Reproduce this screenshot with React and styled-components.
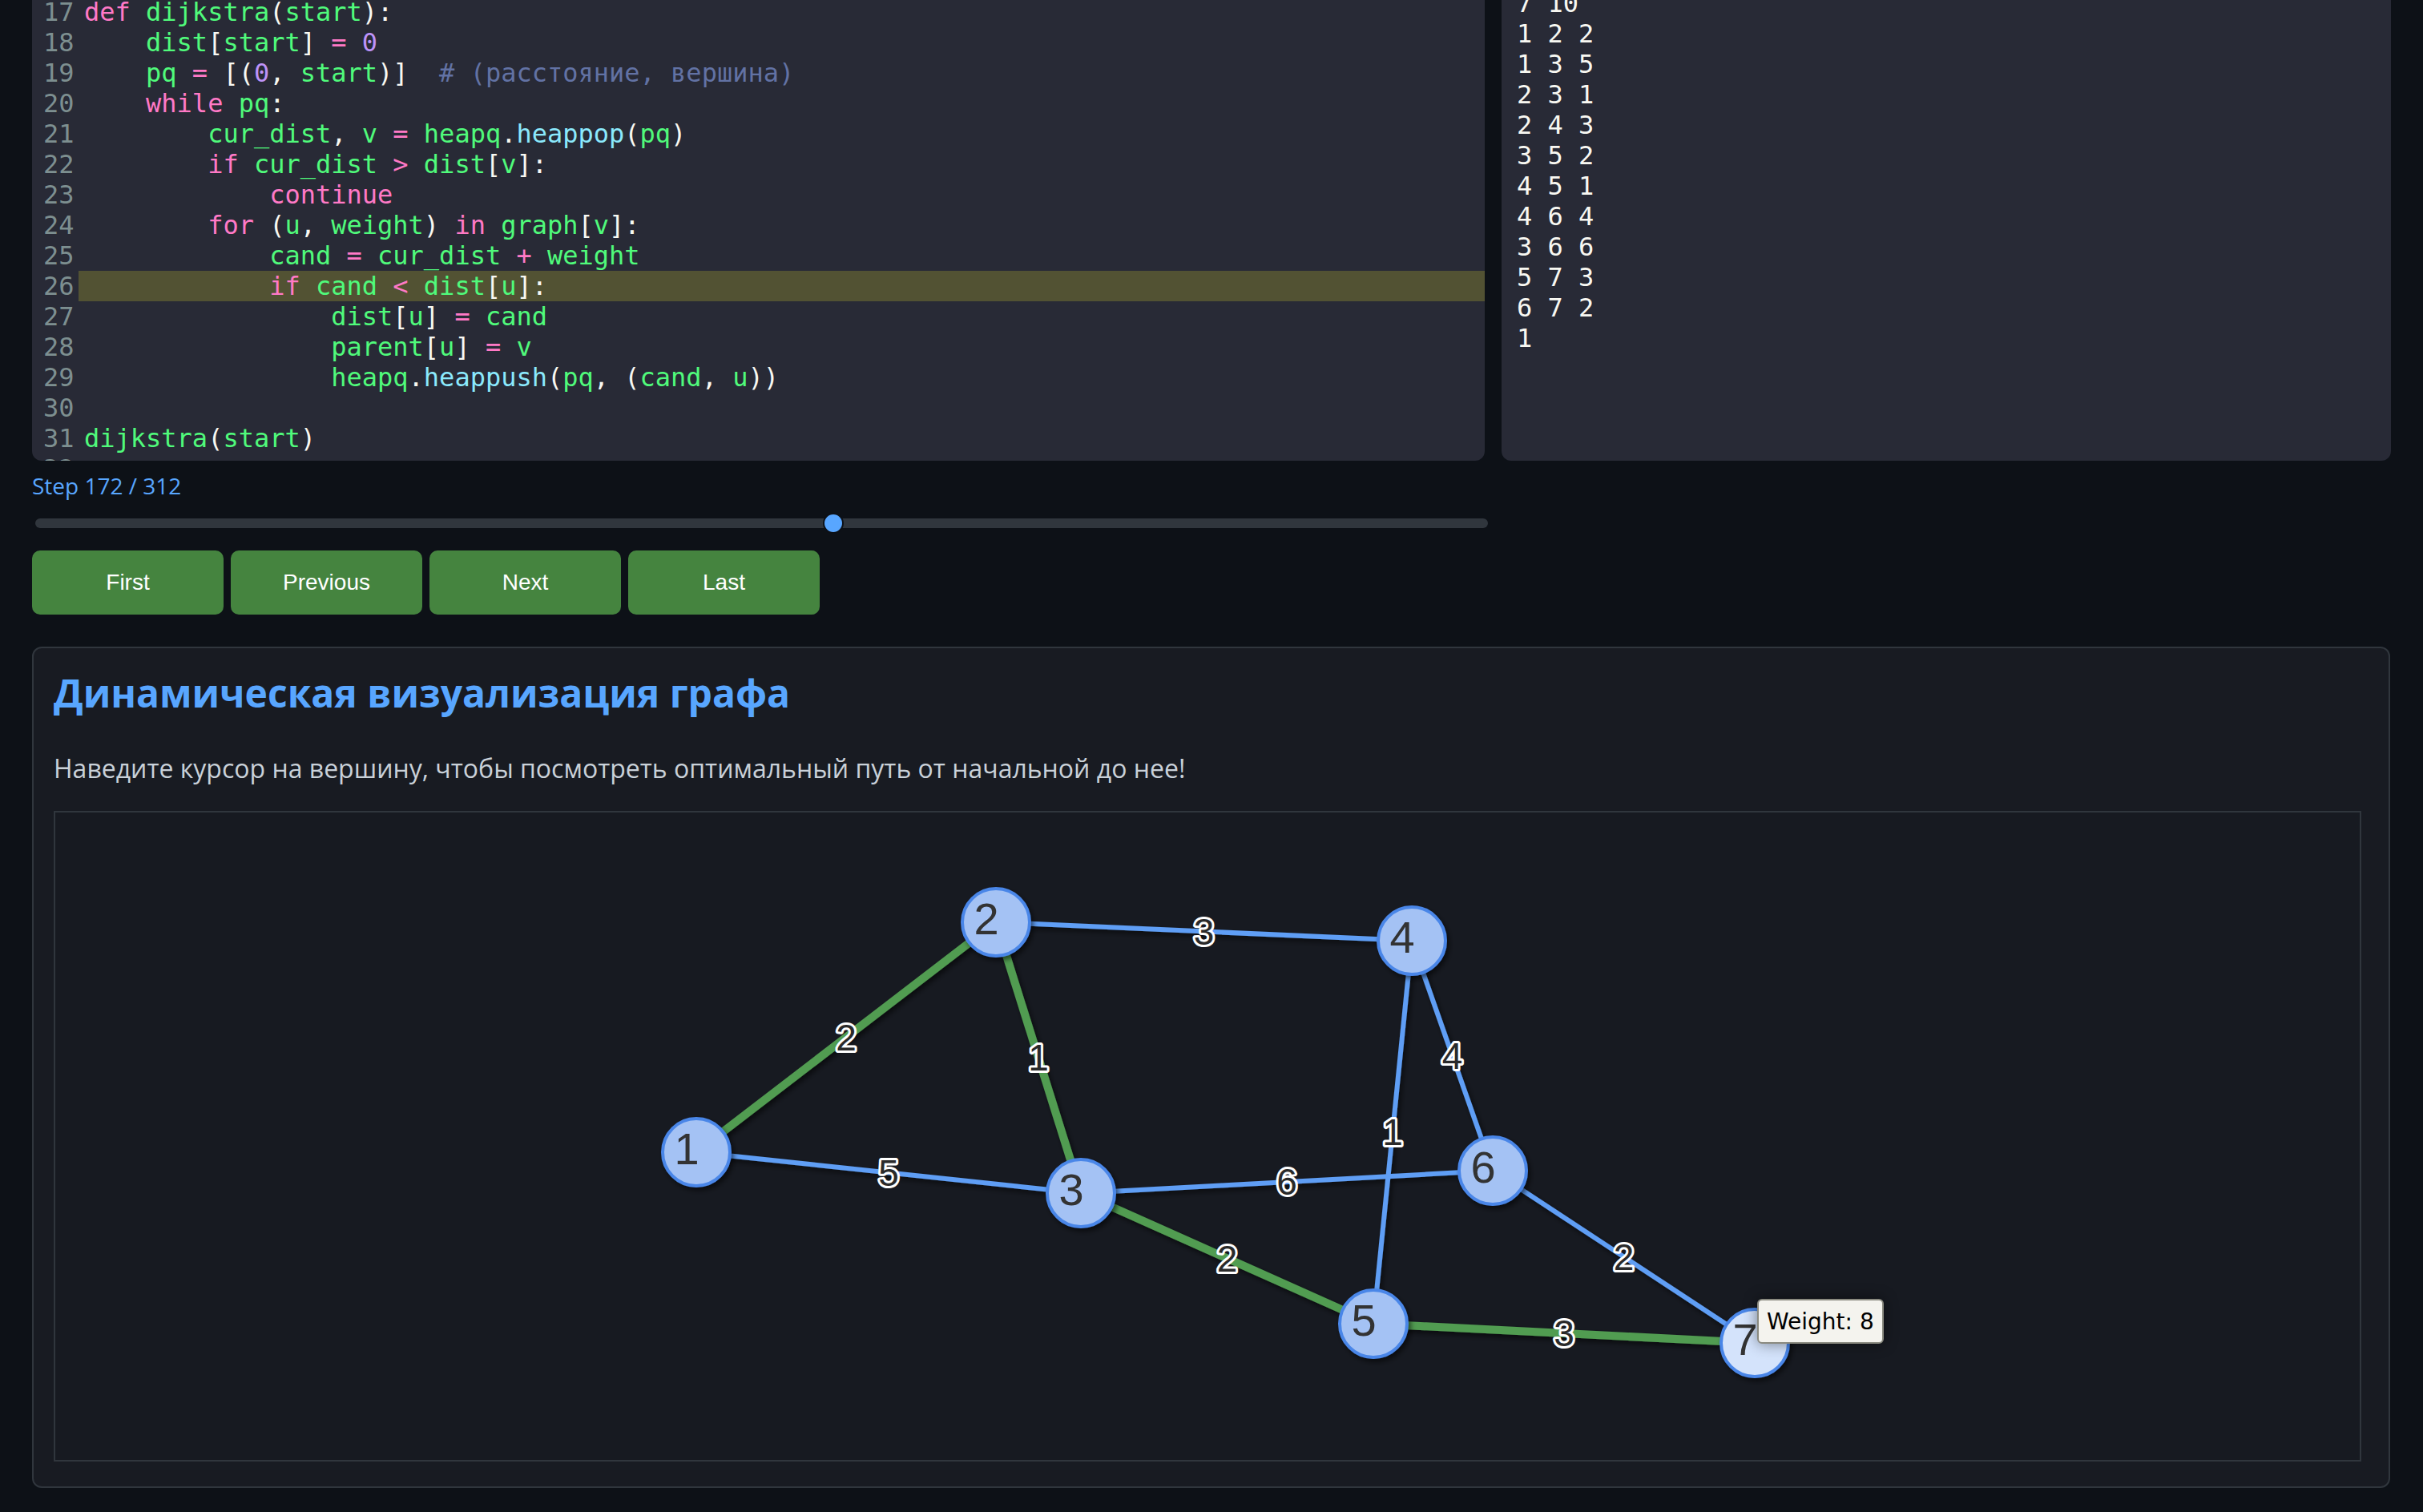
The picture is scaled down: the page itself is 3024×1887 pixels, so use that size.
import React from "react";
import styled, { createGlobalStyle } from "styled-components";

const GlobalStyle = createGlobalStyle`
  html, body {
    margin: 0;
    padding: 0;
    background: #0d1117;
    overflow: hidden;
  }
  * { box-sizing: border-box; }
`;

const Page = styled.div`
  width: 3024px;
  height: 1887px;
  padding: 0 40px;
  background: #0d1117;
  font-family: "Open Sans", "Noto Sans", sans-serif;
`;

const TopRow = styled.div`
  display: grid;
  grid-template-columns: 1813px 1fr;
  gap: 21px;
  height: 575px;
`;

const Panel = styled.div`
  background: #282a36;
  border-radius: 0 0 12px 12px;
  overflow: hidden;
  font-family: "DejaVu Sans Mono", "Liberation Mono", monospace;
  font-size: 32px;
  line-height: 38px;
  white-space: pre;
`;

const CodeList = styled.div`
  margin-top: -4px;
  padding-left: 14px;
`;

const CodeLine = styled.div`
  display: flex;
  height: 38px;
`;

const LineNo = styled.span`
  width: 44px;
  flex: none;
  color: #7d8f90;
`;

const LineText = styled.span`
  flex: 1;
  padding-left: 7px;
  background: ${(p) => (p.active ? "#525233" : "transparent")};
`;

const colors = {
  k: "#ff79c6",
  o: "#ff79c6",
  n: "#50fa7b",
  p: "#f8f8f2",
  d: "#bd93f9",
  f: "#8be9fd",
  c: "#6272a4",
};

const Tok = styled.span`
  color: ${(p) => colors[p.t]};
`;

const OutputText = styled.div`
  margin-top: -15px;
  padding-left: 19px;
  color: #f8f8f2;
`;

const StepLabel = styled.div`
  margin-top: 12px;
  color: #58a6ff;
  font-size: 28px;
  line-height: 38px;
`;

const Range = styled.input`
  -webkit-appearance: none;
  appearance: none;
  display: block;
  width: 1813px;
  height: 26px;
  margin: 15px 0 0 4px;
  background: transparent;

  &::-webkit-slider-runnable-track {
    height: 12px;
    background: #30363d;
    border-radius: 6px;
  }
  &::-webkit-slider-thumb {
    -webkit-appearance: none;
    width: 26px;
    height: 26px;
    margin-top: -7px;
    border-radius: 50%;
    background: #58a6ff;
    border: 2px solid #0d1117;
  }
`;

const ButtonRow = styled.div`
  display: flex;
  gap: 9px;
  margin-top: 21px;
`;

const NavButton = styled.button`
  width: 239px;
  height: 80px;
  border: none;
  border-radius: 10px;
  background: #45843f;
  color: #ffffff;
  font-family: "Liberation Sans", Arial, sans-serif;
  font-size: 28px;
  cursor: pointer;
`;

const Card = styled.section`
  margin-top: 40px;
  width: 2943px;
  height: 1050px;
  border: 2px solid #30363d;
  border-radius: 12px;
  background: #181b22;
  padding: 0 0 0 25px;
`;

const Title = styled.h2`
  margin: 23px 0 0;
  color: #58a6ff;
  font-size: 48px;
  font-weight: 700;
  line-height: 66px;
`;

const Hint = styled.p`
  margin: 39px 0 0;
  color: #c9d1d9;
  font-size: 32px;
  line-height: 44px;
`;

const GraphBox = styled.div`
  position: relative;
  margin-top: 31px;
  width: 2880px;
  height: 812px;
  border: 2px solid #30363d;
  background: #171a21;
`;

const Tooltip = styled.div`
  position: absolute;
  left: ${(p) => p.x}px;
  top: ${(p) => p.y}px;
  padding: 0 10px;
  height: 56px;
  display: flex;
  align-items: center;
  background: #f4f3ee;
  border: 2px solid #8a8a80;
  border-radius: 6px;
  color: #000;
  font-family: "DejaVu Sans", Verdana, sans-serif;
  font-size: 28px;
  box-shadow: 0 0 18px rgba(0, 0, 0, 0.45);
`;

const code = [
  [17, [["k", "def"], ["p", " "], ["n", "dijkstra"], ["p", "("], ["n", "start"], ["p", "):"]]],
  [18, [["p", "    "], ["n", "dist"], ["p", "["], ["n", "start"], ["p", "] "], ["o", "="], ["p", " "], ["d", "0"]]],
  [19, [["p", "    "], ["n", "pq"], ["p", " "], ["o", "="], ["p", " [("], ["d", "0"], ["p", ", "], ["n", "start"], ["p", ")]  "], ["c", "# (расстояние, вершина)"]]],
  [20, [["p", "    "], ["k", "while"], ["p", " "], ["n", "pq"], ["p", ":"]]],
  [21, [["p", "        "], ["n", "cur_dist"], ["p", ", "], ["n", "v"], ["p", " "], ["o", "="], ["p", " "], ["n", "heapq"], ["p", "."], ["f", "heappop"], ["p", "("], ["n", "pq"], ["p", ")"]]],
  [22, [["p", "        "], ["k", "if"], ["p", " "], ["n", "cur_dist"], ["p", " "], ["o", ">"], ["p", " "], ["n", "dist"], ["p", "["], ["n", "v"], ["p", "]:"]]],
  [23, [["p", "            "], ["k", "continue"]]],
  [24, [["p", "        "], ["k", "for"], ["p", " ("], ["n", "u"], ["p", ", "], ["n", "weight"], ["p", ") "], ["k", "in"], ["p", " "], ["n", "graph"], ["p", "["], ["n", "v"], ["p", "]:"]]],
  [25, [["p", "            "], ["n", "cand"], ["p", " "], ["o", "="], ["p", " "], ["n", "cur_dist"], ["p", " "], ["o", "+"], ["p", " "], ["n", "weight"]]],
  [26, [["p", "            "], ["k", "if"], ["p", " "], ["n", "cand"], ["p", " "], ["o", "<"], ["p", " "], ["n", "dist"], ["p", "["], ["n", "u"], ["p", "]:"]]],
  [27, [["p", "                "], ["n", "dist"], ["p", "["], ["n", "u"], ["p", "] "], ["o", "="], ["p", " "], ["n", "cand"]]],
  [28, [["p", "                "], ["n", "parent"], ["p", "["], ["n", "u"], ["p", "] "], ["o", "="], ["p", " "], ["n", "v"]]],
  [29, [["p", "                "], ["n", "heapq"], ["p", "."], ["f", "heappush"], ["p", "("], ["n", "pq"], ["p", ", ("], ["n", "cand"], ["p", ", "], ["n", "u"], ["p", "))"]]],
  [30, []],
  [31, [["n", "dijkstra"], ["p", "("], ["n", "start"], ["p", ")"]]],
  [32, []],
];

const output = ["7 10", "1 2 2", "1 3 5", "2 3 1", "2 4 3", "3 5 2", "4 5 1", "4 6 4", "3 6 6", "5 7 3", "6 7 2", "1"];

// node positions inside the svg (px)
const nodes = {
  1: [800, 424],
  2: [1174, 137],
  3: [1280, 475],
  4: [1693, 160],
  5: [1645, 638],
  6: [1794, 447],
  7: [2121, 662],
};

const edges = [
  [1, 2, 2, true],
  [1, 3, 5, false],
  [2, 3, 1, true],
  [2, 4, 3, false],
  [3, 5, 2, true],
  [4, 5, 1, false],
  [4, 6, 4, false],
  [3, 6, 6, false],
  [5, 7, 3, true],
  [6, 7, 2, false],
];

const Graph = () => (
  <svg width="2876" height="808" style={{ display: "block" }}>
    <defs>
      <filter id="shadow" x="-20%" y="-20%" width="140%" height="140%">
        <feDropShadow dx="3" dy="4" stdDeviation="3" floodColor="#000" floodOpacity="0.55" />
      </filter>
    </defs>
    <g filter="url(#shadow)">
      {edges.map(([a, b, , onPath]) => (
        <line
          key={`${a}-${b}`}
          x1={nodes[a][0]}
          y1={nodes[a][1]}
          x2={nodes[b][0]}
          y2={nodes[b][1]}
          stroke={onPath ? "#519c51" : "#5f9ef5"}
          strokeWidth={onPath ? 10 : 6}
        />
      ))}
    </g>
    {edges.map(([a, b, w]) => (
      <text
        key={`w${a}-${b}`}
        x={(nodes[a][0] + nodes[b][0]) / 2}
        y={(nodes[a][1] + nodes[b][1]) / 2}
        textAnchor="middle"
        dominantBaseline="central"
        fontFamily="Liberation Sans, Arial, sans-serif"
        fontSize="46"
        fill="#2a2a2a"
        stroke="#fff"
        strokeWidth="6"
        strokeLinejoin="round"
        paintOrder="stroke"
      >
        {w}
      </text>
    ))}
    {Object.entries(nodes).map(([id, [x, y]]) => (
      <g key={id}>
        <circle
          cx={x}
          cy={y}
          r="42"
          fill={id === "7" ? "#d4e3fb" : "#a4c2f4"}
          stroke="#4a86e8"
          strokeWidth="4"
          filter="url(#shadow)"
        />
        <text
          x={x - 12}
          y={y - 5}
          textAnchor="middle"
          dominantBaseline="central"
          fontFamily="Liberation Sans, Arial, sans-serif"
          fontSize="56"
          fill="#333"
        >
          {id}
        </text>
      </g>
    ))}
  </svg>
);

export default function App() {
  return (
    <Page>
      <GlobalStyle />
      <TopRow>
        <Panel>
          <CodeList>
            {code.map(([no, toks]) => (
              <CodeLine key={no}>
                <LineNo>{no}</LineNo>
                <LineText active={no === 26}>
                  {toks.map(([t, s], i) => (
                    <Tok key={i} t={t}>
                      {s}
                    </Tok>
                  ))}
                </LineText>
              </CodeLine>
            ))}
          </CodeList>
        </Panel>
        <Panel>
          <OutputText>
            {output.map((l, i) => (
              <div key={i}>{l}</div>
            ))}
          </OutputText>
        </Panel>
      </TopRow>

      <StepLabel>Step 172 / 312</StepLabel>
      <Range type="range" min="0" max="311" defaultValue="171" />

      <ButtonRow>
        <NavButton>First</NavButton>
        <NavButton>Previous</NavButton>
        <NavButton>Next</NavButton>
        <NavButton>Last</NavButton>
      </ButtonRow>

      <Card>
        <Title>Динамическая визуализация графа</Title>
        <Hint>Наведите курсор на вершину, чтобы посмотреть оптимальный путь от начальной до нее!</Hint>
        <GraphBox>
          <Graph />
          <Tooltip x={2124} y={607}>Weight: 8</Tooltip>
        </GraphBox>
      </Card>
    </Page>
  );
}
